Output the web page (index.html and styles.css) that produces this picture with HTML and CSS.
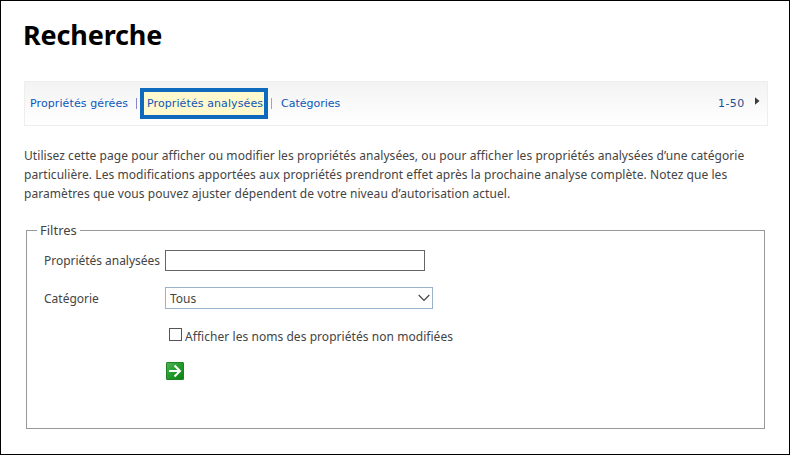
FILE: index.html
```html
<!DOCTYPE html>
<html lang="fr">
<head>
<meta charset="utf-8">
<title>Recherche</title>
<link rel="stylesheet" href="styles.css">
</head>
<body>
<main class="page">
  <h1 class="title">Recherche</h1>
  <nav class="toolbar">
    <a class="link managed">Propriétés gérées</a>
    <span class="sep sep-violet"></span>
    <a class="link current">Propriétés analysées</a>
    <span class="sep sep-cyan"></span>
    <a class="link categories">Catégories</a>
    <span class="range">1-50</span>
    <svg class="next" width="5" height="8" viewBox="0 0 5 8"><path d="M0 0.2L4.5 4L0 7.8z" fill="#3c3c3c"/></svg>
  </nav>
  <p class="intro">
    <span class="line line-1">Utilisez cette page pour afficher ou modifier les propriétés analysées, ou pour afficher les propriétés analysées d’une catégorie</span>
    <span class="line line-2">particulière. Les modifications apportées aux propriétés prendront effet après la prochaine analyse complète. Notez que les</span>
    <span class="line line-3">paramètres que vous pouvez ajuster dépendent de votre niveau d’autorisation actuel.</span>
  </p>
  <fieldset class="filters">
    <legend class="legend">Filtres</legend>
    <div class="row">
      <label class="label label-prop" for="prop">Propriétés analysées</label>
      <input class="field" id="prop" type="text">
    </div>
    <div class="row row-category">
      <span class="label label-cat">Catégorie</span>
      <div class="select"><span>Tous</span>
        <svg width="12" height="8" viewBox="0 0 12 8"><path d="M0.7 1L6 6.3L11.3 1" fill="none" stroke="#444" stroke-width="1.2"/></svg>
      </div>
    </div>
    <div class="row row-check">
      <span class="box"></span>
      <span class="check-text">Afficher les noms des propriétés non modifiées</span>
    </div>
    <svg class="go" width="18" height="18" viewBox="0 0 18 18">
      <defs><linearGradient id="g" x1="0" y1="0" x2="1" y2="1"><stop offset="0" stop-color="#4fb457"/><stop offset="0.5" stop-color="#259a2d"/><stop offset="1" stop-color="#078210"/></linearGradient></defs>
      <rect x="0.5" y="0.5" width="17" height="17" rx="0.5" fill="url(#g)" stroke="#1d8425"/>
      <path d="M3 9H14M8.5 3.5L14 9L8.5 14.5" fill="none" stroke="#fff" stroke-width="2"/>
    </svg>
  </fieldset>
</main>
</body>
</html>
```
FILE: styles.css
```css
* { box-sizing: border-box; }
body { margin: 0; background: #fff; font-family: "Noto Sans", sans-serif; color: #444; }
.page { width: 790px; height: 455px; border: 1px solid #000; padding: 0 21px 0 23px; overflow: hidden; }
.title { margin: 14px 0 0 -1px; height: 40px; font: bold 27px/40px "Noto Sans", sans-serif; letter-spacing: -0.15px; color: #000; }
.toolbar { display: flex; align-items: center; width: 744px; height: 45px; margin-top: 26px; padding: 0 7px 0 5px; border: 1px solid #eee; background: linear-gradient(#f3f3f3, #fff); font: 11px/14px "DejaVu Sans", sans-serif; color: #0b57b8; white-space: nowrap; }
.link { letter-spacing: 0.1px; }
.managed { width: 106px; }
.sep { width: 1px; height: 11px; }
.sep-violet { background: #8c86c8; margin-right: 3px; }
.sep-cyan { background: #70b4e8; margin: 0 9px 0 3px; }
.current { width: 128px; height: 31px; padding: 5px 0 0 3px; border: 4px solid #0f69bd; background: #fff9cd; }
.categories { letter-spacing: 0; }
.range { margin-left: auto; width: 37px; color: #1c4f91; letter-spacing: 0.4px; }
.next { margin-top: -5px; }
.intro { margin: 20px 0 0; font-size: 12px; line-height: 19px; letter-spacing: 0.063px; }
.line { display: block; white-space: nowrap; }
.filters { width: 739px; height: 208px; margin: 18px 0 0 2px; padding: 0 0 0 17px; border: 1px solid #999; font-size: 12px; }
.legend { margin-left: -7px; padding: 0 3px; height: 18px; line-height: 18px; font-size: 13px; }
.row { display: flex; align-items: center; height: 22px; margin-top: 10px; white-space: nowrap; }
.label { width: 121px; }
.label-prop { letter-spacing: -0.03px; }
.field { width: 260px; height: 21px; margin: 0; border: 1px solid #666; border-radius: 0; padding: 0 4px; background: #fff; }
.row-category { margin-top: 16px; }
.select { display: flex; align-items: center; justify-content: space-between; width: 268px; height: 22px; padding: 0 2px 0 4px; border: 1px solid #98b3cb; background: #fff; }
.row-check { margin: 16px 0 0 125px; }
.check-text { letter-spacing: 0.05px; }
.box { width: 13px; height: 13px; margin: -4px 3px 0 0; border: 1px solid #555; }
.go { display: block; margin: 15px 0 0 122px; }
```
